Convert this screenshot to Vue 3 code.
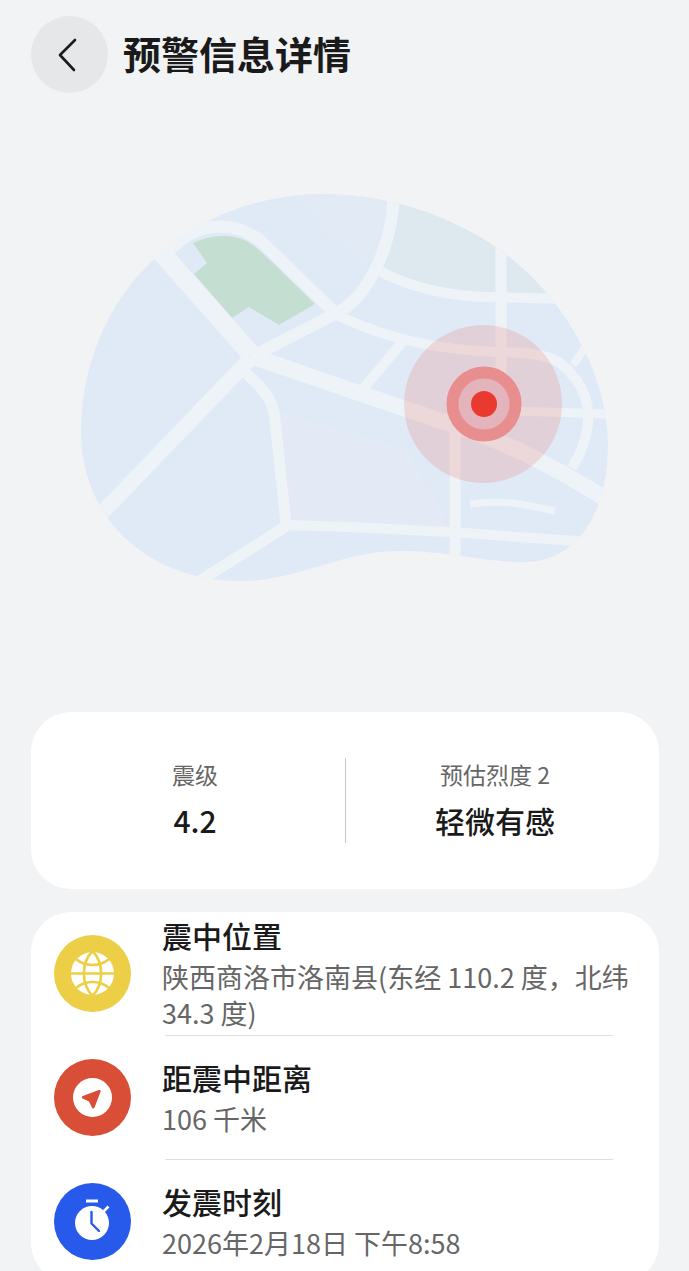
<script setup>
const stats = [
  { label: '震级', value: '4.2' },
  { label: '预估烈度 2', value: '轻微有感' },
]

const details = [
  { icon: 'globe', title: '震中位置', text: '陕西商洛市洛南县(东经 110.2 度，北纬 34.3 度)' },
  { icon: 'compass', title: '距震中距离', text: '106 千米' },
  { icon: 'timer', title: '发震时刻', text: '2026年2月18日 下午8:58' },
]
</script>

<template>
  <div class="page">
    <header class="header">
      <button class="back" type="button" aria-label="返回">
        <svg viewBox="0 0 77 77" aria-hidden="true">
          <path d="M44 24 L29 39 L43 54" fill="none" stroke="#1b1b1c" stroke-width="2.6" stroke-linecap="round" stroke-linejoin="round" />
        </svg>
      </button>
      <h1 class="heading">预警信息详情</h1>
    </header>

    <main>
      <div class="map">
        <svg viewBox="80 190 530 395" role="img" aria-label="震中地图">
          <defs>
            <clipPath id="land">
              <path d="M81 432 C81 370 105 305 153 260 C200 215 262 194 325 194 C390 195 450 215 500 250 C560 293 608 370 608 445 C608 515 575 562 525 562 C480 562 450 551 400 551 C340 551 300 581 240 581 C150 581 81 520 81 432Z" />
            </clipPath>
          </defs>
          <g clip-path="url(#land)">
            <rect x="80" y="190" width="530" height="395" fill="#e0eaf6" />
            <path d="M290 190 H396 C394 230 380 255 365 265 L330 235Z" fill="#e2eaf6" />
            <path d="M278 412 L360 436 L408 452 L446 520 V530 L288 525Z" fill="#e3eaf5" />
            <path d="M396 190 H570 V297 L493 297 C450 296 410 286 377 270 C390 250 394 225 396 190Z" fill="#dde9ee" />
            <path d="M193 243 C212 234 236 233 251 244 C262 251 290 280 315 304 L279 325 L249 307 L232 318 L194 274 L207 263Z" fill="#c4dfd2" />
            <g class="roads">
              <path stroke-width="19" d="M150 240 L251 354" />
              <path stroke-width="16" d="M251 356 L350 390 L450 424 C490 437 530 452 606 499" />
              <path stroke-width="12" d="M251 357 L335 314 C365 300 393 250 394 190" />
              <path stroke-width="12" d="M160 262 C190 220 232 218 262 242 L335 313" />
              <path stroke-width="10" d="M335 314 C380 336 430 350 500 352 C545 353 560 358 572 375 C595 400 592 435 572 468" />
              <path stroke-width="10" d="M377 270 C410 287 450 297 493 297 L570 299" />
              <path stroke-width="11" d="M501 240 V384" />
              <path stroke-width="11" d="M455 424 V565" />
              <path stroke-width="10" d="M404 340 L362 390" />
              <path stroke-width="8" d="M589 342 L573 365" />
              <path stroke-width="9" d="M484 410 L612 414" />
              <path stroke-width="15" d="M251 358 L98 517" />
              <path stroke-width="11" d="M240 368 C266 390 274 402 275 420 L286 524" />
              <path stroke-width="11" d="M288 525 L198 582" />
              <path stroke-width="10" d="M286 525 L350 527 L450 532 L590 542" />
              <path stroke-width="7" d="M470 504 C500 500 520 503 555 511" />
            </g>
          </g>
          <circle cx="483" cy="404" r="79" fill="#eb4637" fill-opacity="0.155" />
          <circle cx="484" cy="404" r="37" fill="#e3b4bb" />
          <circle cx="484" cy="404" r="31.5" fill="none" stroke="#e88e8e" stroke-width="12" />
          <circle cx="484" cy="404" r="13" fill="#ea3a2f" />
        </svg>
      </div>

      <section class="card stats">
        <div v-for="stat in stats" :key="stat.label" class="stat">
          <span class="stat-label">{{ stat.label }}</span>
          <strong class="stat-value">{{ stat.value }}</strong>
        </div>
      </section>

      <section class="card list">
        <template v-for="(item, i) in details" :key="item.icon">
          <hr v-if="i" class="divider" />
          <div class="row">
            <svg class="icon" viewBox="0 0 77 77" aria-hidden="true">
              <template v-if="item.icon === 'globe'">
                <circle cx="38.5" cy="38.5" r="38.5" fill="#eccf47" />
                <circle cx="38.5" cy="38.5" r="21.5" fill="#fff" />
                <g fill="none" stroke="#eccf47" stroke-width="2.6">
                  <path d="M16 38.5 H61" />
                  <path d="M38.5 16 C27 28 27 49 38.5 61 C50 49 50 28 38.5 16Z" />
                  <path d="M22 24 C31 32 46 32 55 24" />
                  <path d="M22 53 C31 45 46 45 55 53" />
                </g>
              </template>
              <template v-else-if="item.icon === 'compass'">
                <circle cx="38.5" cy="38.5" r="38.5" fill="#d84e36" />
                <circle cx="38.5" cy="38.5" r="19.5" fill="#fff" />
                <path d="M45.3 32.3 L29.2 38.2 L36 41.4 L39.2 48Z" fill="#d84e36" stroke="#d84e36" stroke-width="2.8" stroke-linejoin="round" />
              </template>
              <template v-else>
                <circle cx="38.5" cy="38.5" r="38.5" fill="#2759eb" />
                <circle cx="38" cy="40" r="17" fill="#fff" />
                <path d="M32 18 H44" stroke="#fff" stroke-width="3" />
                <path d="M49 29 L54.5 23.5" stroke="#fff" stroke-width="2.6" />
                <path d="M37.5 29 V40.5 L45 48" fill="none" stroke="#2759eb" stroke-width="2.4" stroke-linecap="round" stroke-linejoin="round" />
              </template>
            </svg>
            <div class="row-body">
              <h2 class="row-title">{{ item.title }}</h2>
              <p class="row-text">{{ item.text }}</p>
            </div>
          </div>
        </template>
      </section>
    </main>
  </div>
</template>

<style>
body {
  margin: 0;
  background: #f1f3f5;
}
</style>

<style scoped>
.page {
  box-sizing: border-box;
  height: 100vh;
  overflow-y: auto;
  scrollbar-width: none;
  padding: 16px 30px 24px 31px;
  background: #f1f3f5;
  color: #1a1a1b;
  font-family: "Noto Sans CJK SC", sans-serif;
}
.header {
  display: flex;
  align-items: center;
  gap: 15px;
}
.back {
  flex: none;
  width: 77px;
  height: 77px;
  padding: 0;
  border: 0;
  border-radius: 50%;
  background: #e6e7e9;
}
.back svg {
  display: block;
}
.heading {
  margin: 0;
  padding-bottom: 4px;
  font-size: 38px;
  line-height: 56px;
  font-weight: 700;
}
.map {
  padding: 97px 0 127px;
}
.map svg {
  display: block;
  width: 84.4%;
  margin: 0 auto;
}
.roads {
  fill: none;
  stroke: #eef3f7;
  stroke-linejoin: round;
}
.card {
  border-radius: 40px;
  background: #fff;
}
.stats {
  display: flex;
  padding: 42px 14px 45px;
}
.stat {
  position: relative;
  flex: 1;
  display: flex;
  flex-direction: column;
  align-items: center;
  gap: 2px;
}
.stat + .stat::before {
  content: "";
  position: absolute;
  left: 0;
  top: 4px;
  bottom: 1px;
  width: 1px;
  background: #c9c9ca;
}
.stat-label {
  font-size: 23px;
  line-height: 40px;
  color: #666;
}
.stat-value {
  font-size: 30px;
  line-height: 48px;
  font-weight: 500;
}
.list {
  margin-top: 23px;
}
.row {
  display: flex;
  align-items: center;
  gap: 31px;
  min-height: 123px;
  padding: 0 23px;
}
.icon {
  flex: none;
  width: 77px;
  height: 77px;
}
.row-body {
  padding-bottom: 4px;
}
.row-title {
  margin: 0 0 2px;
  font-size: 30px;
  line-height: 44px;
  font-weight: 500;
}
.row-text {
  margin: 0;
  font-size: 27px;
  line-height: 36px;
  color: #666;
}
.divider {
  height: 1px;
  margin: 0 46px 0 134px;
  border: 0;
  background: #dedede;
}
</style>
